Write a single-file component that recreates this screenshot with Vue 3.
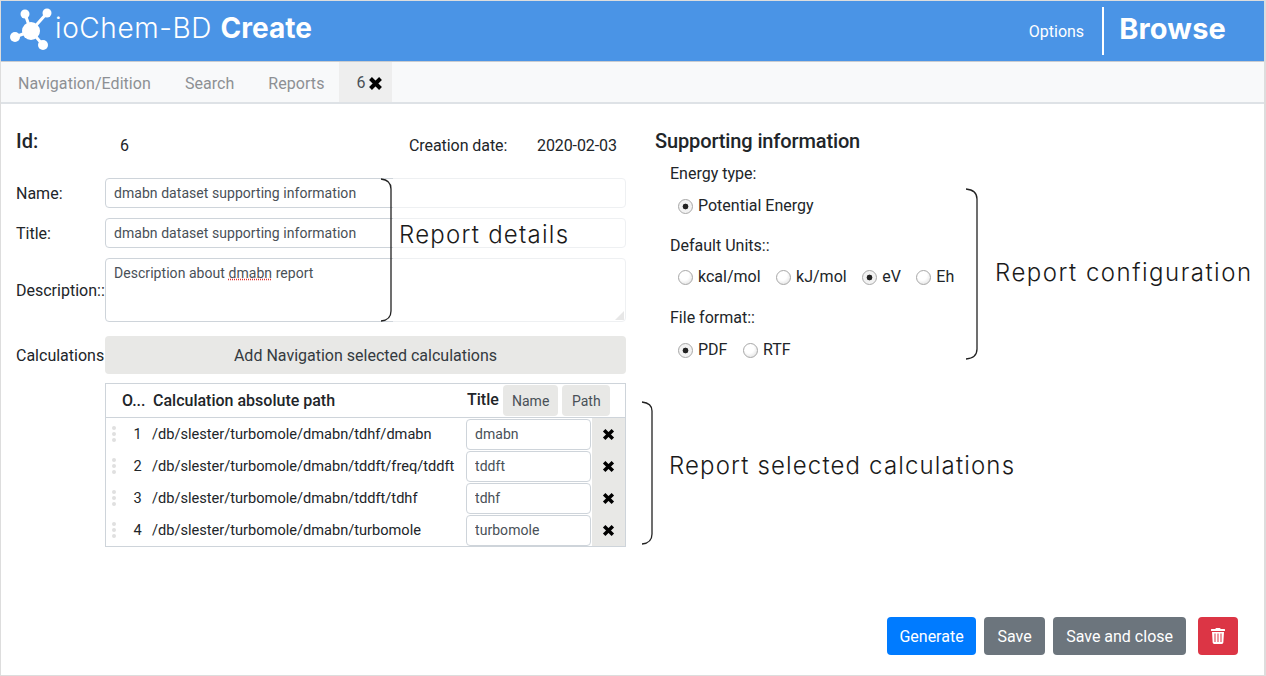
<template>
  <div class="page">
    <header class="topbar">
      <div class="brand">
        <svg class="logo" viewBox="0 0 56 56" width="56" height="56">
          <g stroke="#fff" stroke-width="3" stroke-linecap="round">
            <line x1="31" y1="29" x2="25" y2="12" />
            <line x1="31" y1="29" x2="47" y2="11" />
            <line x1="31" y1="29" x2="15" y2="35" />
            <line x1="31" y1="29" x2="43" y2="43" />
          </g>
          <g fill="#fff">
            <circle cx="31" cy="29" r="9" />
            <circle cx="25" cy="12" r="4.5" />
            <circle cx="47" cy="11" r="4.5" />
            <circle cx="15" cy="35" r="5" />
            <circle cx="43" cy="43" r="5" />
          </g>
        </svg>
        <span class="brand-text">ioChem-BD <b>Create</b></span>
      </div>
      <div class="top-right">
        <span class="options">Options</span>
        <span class="browse">Browse</span>
      </div>
    </header>

    <nav class="tabs">
      <span v-for="tab in tabs" :key="tab" class="tab">{{ tab }}</span>
      <span class="tab active">6 <svg class="x tab-x" viewBox="0 0 12 12"><path d="M2 2 L10 10 M10 2 L2 10" /></svg></span>
    </nav>

    <main class="content">
      <div class="columns">
        <section class="left">
          <div class="id-row">
            <span class="id-label">Id:</span>
            <span class="id-value">6</span>
            <span class="date-label">Creation date:</span>
            <span class="date-value">2020-02-03</span>
          </div>

          <div class="form-row">
            <label>Name:</label>
            <input class="field" value="dmabn dataset supporting information" />
          </div>
          <div class="form-row">
            <label>Title:</label>
            <input class="field" value="dmabn dataset supporting information" />
          </div>
          <div class="form-row">
            <label>Description::</label>
            <div class="field area">Description about <span class="misspelled">dmabn</span> report
              <svg class="grip" viewBox="0 0 10 10"><path d="M10 0 V10 H0 Z" /></svg>
            </div>
          </div>
          <div class="form-row add-row">
            <label>Calculations</label>
            <button class="add-btn">Add Navigation selected calculations</button>
          </div>

          <div class="calc-table">
            <div class="calc-head">
              <b class="col-order">O...</b>
              <b class="col-path">Calculation absolute path</b>
              <b class="col-title">Title</b>
              <button class="small-btn name-btn">Name</button>
              <button class="small-btn path-btn">Path</button>
            </div>
            <div v-for="(calc, i) in calcs" :key="calc.title" class="calc-row">
              <span class="drag"><i /><i /><i /></span>
              <span class="num">{{ i + 1 }}</span>
              <span class="path">{{ calc.path }}</span>
              <input class="field row-input" :value="calc.title" />
              <span class="remove"><svg class="x" viewBox="0 0 12 12"><path d="M2 2 L10 10 M10 2 L2 10" /></svg></span>
            </div>
          </div>
        </section>

        <section class="right">
          <h2>Supporting information</h2>
          <div v-for="group in groups" :key="group.label" class="group">
            <div class="group-label">{{ group.label }}</div>
            <div class="radios">
              <label v-for="opt in group.options" :key="opt" class="radio-item">
                <input type="radio" :name="group.label" :checked="opt === group.value" />
                <span>{{ opt }}</span>
              </label>
            </div>
          </div>
        </section>
      </div>

      <div class="actions">
        <button class="btn primary">Generate</button>
        <button class="btn secondary save-btn">Save</button>
        <button class="btn secondary">Save and close</button>
        <button class="btn danger">
          <svg viewBox="0 0 448 512" width="14" height="16"><path fill="#fff" d="M432 32H312l-9.400-18.700A24 24 0 0 0 281.100 0H166.800a23.700 23.700 0 0 0-21.400 13.300L136 32H16A16 16 0 0 0 0 48v32a16 16 0 0 0 16 16h416a16 16 0 0 0 16-16V48a16 16 0 0 0-16-16zM53.200 467a48 48 0 0 0 47.900 45h245.800a48 48 0 0 0 47.900-45L416 128H32zM304 176h32v272h-32zm-96 0h32v272h-32zm-96 0h32v272h-32z" /></svg>
        </button>
      </div>
    </main>

    <!-- annotations drawn over the screenshot -->
    <div class="fade-box" />
    <svg class="brackets" width="1266" height="676" viewBox="0 0 1266 676">
      <path d="M381 179 Q391 180 391 189 V311 Q391 320 381 321" />
      <path d="M642 402 Q652 403 652 411 V534 Q652 543 642 544" />
      <path d="M966 189 Q977 190 977 199 V349 Q977 358 966 359" />
    </svg>
    <span class="note note-details">Report details</span>
    <span class="note note-selected">Report selected calculations</span>
    <span class="note note-config">Report configuration</span>
  </div>
</template>

<script setup>
const tabs = ['Navigation/Edition', 'Search', 'Reports']

const calcs = [
  { path: '/db/slester/turbomole/dmabn/tdhf/dmabn', title: 'dmabn' },
  { path: '/db/slester/turbomole/dmabn/tddft/freq/tddft', title: 'tddft' },
  { path: '/db/slester/turbomole/dmabn/tddft/tdhf', title: 'tdhf' },
  { path: '/db/slester/turbomole/dmabn/turbomole', title: 'turbomole' }
]

const groups = [
  { label: 'Energy type:', options: ['Potential Energy'], value: 'Potential Energy' },
  { label: 'Default Units::', options: ['kcal/mol', 'kJ/mol', 'eV', 'Eh'], value: 'eV' },
  { label: 'File format::', options: ['PDF', 'RTF'], value: 'PDF' }
]
</script>

<style>
html, body {
  margin: 0;
  background: #fff;
}
</style>

<style scoped>
.page {
  position: relative;
  width: 1266px;
  height: 676px;
  box-sizing: border-box;
  border: 1px solid #ddd;
  border-right-width: 2px;
  display: flex;
  flex-direction: column;
  overflow: hidden;
  font-family: Roboto, "Liberation Sans", sans-serif;
  font-size: 16px;
  color: #212529;
}

.topbar {
  height: 60px;
  background: #4a94e6;
  color: #fff;
  display: flex;
  justify-content: space-between;
  align-items: center;
  border-bottom: 1px solid #c9ccd0;
  flex: none;
}
.brand {
  display: flex;
  align-items: center;
}
.logo {
  margin-left: -1px;
  margin-bottom: 2px;
}
.brand-text {
  font-family: Inter, sans-serif;
  font-size: 28px;
  font-weight: 300;
  letter-spacing: 0.6px;
  white-space: nowrap;
  margin-left: -1px;
  margin-bottom: 6px;
}
.brand-text b {
  font-weight: 700;
  letter-spacing: 0;
}
.top-right {
  display: flex;
  align-items: center;
  height: 48px;
  margin-right: 38px;
}
.options {
  margin-right: 18px;
}
.browse {
  border-left: 2px solid #fff;
  height: 48px;
  line-height: 44px;
  padding-left: 15px;
  font-family: Inter, sans-serif;
  font-size: 29px;
  font-weight: 700;
  letter-spacing: 0.17px;
}

.tabs {
  height: 40px;
  background: #f8f9fa;
  border-bottom: 2px solid #dee2e6;
  display: flex;
  flex: none;
}
.tab {
  padding: 0 17px;
  line-height: 44px;
  letter-spacing: 0.05px;
  color: #8d9094;
}
.tab.active {
  background: #eee;
  color: #495057;
  display: flex;
  align-items: center;
  gap: 3px;
  margin-left: -2px;
  padding: 2px 9px 0 17px;
}
.x {
  width: 13px;
  height: 13px;
  fill: none;
  stroke: #000;
  stroke-width: 3.2;
}
.tab-x {
  width: 15px;
  height: 15px;
}

.content {
  flex: 1;
  display: flex;
  flex-direction: column;
  padding: 24px 26px 20px 15px;
}
.columns {
  display: flex;
  gap: 29px;
}
.left {
  width: 610px;
}

.id-row {
  display: flex;
  align-items: center;
  height: 34px;
  margin-bottom: 16px;
}
.id-label {
  width: 104px;
  font-size: 20px;
  font-weight: 500;
  margin-bottom: 8px;
}
.id-value {
  width: 289px;
}
.date-label {
  width: 128px;
  letter-spacing: -0.07px;
}
.date-value {
  letter-spacing: -0.1px;
}

.form-row {
  display: grid;
  grid-template-columns: 89px 521px;
  align-items: center;
  margin-bottom: 10px;
}
.field {
  box-sizing: border-box;
  height: 30px;
  width: 100%;
  border: 1px solid #ced4da;
  border-radius: 4px;
  padding: 0 8px;
  font: 14px Roboto, sans-serif;
  letter-spacing: 0.05px;
  color: #495057;
  background: #fff;
  outline: none;
}
.area {
  position: relative;
  height: 64px;
  padding-top: 6px;
}
.misspelled {
  text-decoration: underline dotted #d33;
}
.grip {
  position: absolute;
  right: 1px;
  bottom: 1px;
  width: 9px;
  height: 9px;
  fill: #bbb;
}
.add-row {
  margin: 14px 0 9px;
}
.add-btn {
  height: 38px;
  border: none;
  border-radius: 4px;
  background: #e8e8e6;
  color: #343a40;
  font: 16px Roboto, sans-serif;
}

.calc-table {
  margin-left: 89px;
  border: 1px solid #ced4da;
}
.calc-head {
  display: flex;
  align-items: center;
  height: 33px;
  border-bottom: 1px solid #ced4da;
}
.col-order {
  width: 47px;
  padding-left: 16px;
  box-sizing: border-box;
  font-weight: 500;
}
.col-path {
  width: 314px;
  font-weight: 500;
}
.col-title {
  width: 36px;
  padding-bottom: 2px;
  font-weight: 500;
}
.small-btn {
  height: 31px;
  border: none;
  border-radius: 4px;
  background: #e8e8e6;
  color: #495057;
  font: 14px Roboto, sans-serif;
  padding: 0 9px;
}
.name-btn {
  margin-right: 4px;
}
.path-btn {
  width: 48px;
  padding: 0;
}
.calc-row {
  display: flex;
  align-items: center;
  height: 32px;
  font-size: 14.6px;
}
.drag {
  width: 16px;
  padding-left: 6px;
  box-sizing: border-box;
  display: flex;
  flex-direction: column;
  gap: 2px;
  margin-right: 4px;
}
.drag i {
  width: 4px;
  height: 4px;
  border-radius: 50%;
  background: #e0e0e0;
}
.num {
  width: 23px;
  margin-right: 3px;
  text-align: center;
}
.path {
  width: 314px;
  white-space: nowrap;
}
.row-input {
  width: 125px;
  height: 31px;
  flex: none;
}
.remove {
  width: 33px;
  height: 32px;
  margin-left: 1px;
  background: #e8e8e6;
  display: flex;
  align-items: center;
  justify-content: center;
  padding-right: 1px;
  box-sizing: border-box;
}

h2 {
  margin: 0 0 11px;
  font-size: 20px;
  font-weight: 500;
  letter-spacing: -0.13px;
  line-height: 24px;
}
.right {
  padding-top: 1px;
  flex: 1;
}
.group {
  padding-left: 15px;
  margin-bottom: 21px;
}
.group:nth-of-type(1) {
  margin-bottom: 20px;
}
.group:nth-of-type(2) .radios {
  padding-top: 11px;
}
.group-label {
  line-height: 20px;
}
.radios {
  display: flex;
  gap: 15.5px;
  padding: 12px 0 0 8px;
}
.radio-item {
  display: flex;
  align-items: center;
  gap: 5px;
  line-height: 20px;
}
.radio-item input {
  appearance: none;
  margin: 0;
  width: 15px;
  height: 15px;
  border-radius: 50%;
  border: 1px solid #a8a8a8;
  background: radial-gradient(circle at 40% 35%, #fff 40%, #d8d8d8 100%);
}
.radio-item input:checked {
  background: radial-gradient(circle, #222 0 2.6px, #f2f2f2 3.2px);
}

.actions {
  margin-top: auto;
  display: flex;
  justify-content: flex-end;
  gap: 8px;
}
.btn {
  height: 38px;
  padding: 0 13px;
  border: none;
  border-radius: 4px;
  color: #fff;
  font: 16px Roboto, sans-serif;
}
.primary {
  background: #007bff;
  padding: 0 12.5px;
}
.secondary {
  background: #6c757d;
}
.save-btn {
  width: 61px;
  padding: 0;
}
.danger {
  background: #dc3545;
  margin-left: 4px;
  width: 40px;
  padding: 0;
}
.danger svg {
  display: block;
  margin: auto;
}

.fade-box {
  position: absolute;
  left: 392px;
  top: 172px;
  width: 240px;
  height: 155px;
  background: rgba(255, 255, 255, 0.65);
}
.brackets {
  position: absolute;
  left: -1px;
  top: -1px;
  fill: none;
  pointer-events: none;
}
.brackets path {
  stroke: #222;
  stroke-width: 1.3;
}
.note {
  position: absolute;
  font-family: Inter, sans-serif;
  font-weight: 300;
  font-size: 24px;
  letter-spacing: 1.15px;
  color: #1a1a1a;
  white-space: nowrap;
}
.note-details {
  left: 398px;
  top: 219px;
  letter-spacing: 1.25px;
}
.note-selected {
  left: 668px;
  top: 450px;
}
.note-config {
  left: 994px;
  top: 257px;
  letter-spacing: 1.5px;
}
</style>
